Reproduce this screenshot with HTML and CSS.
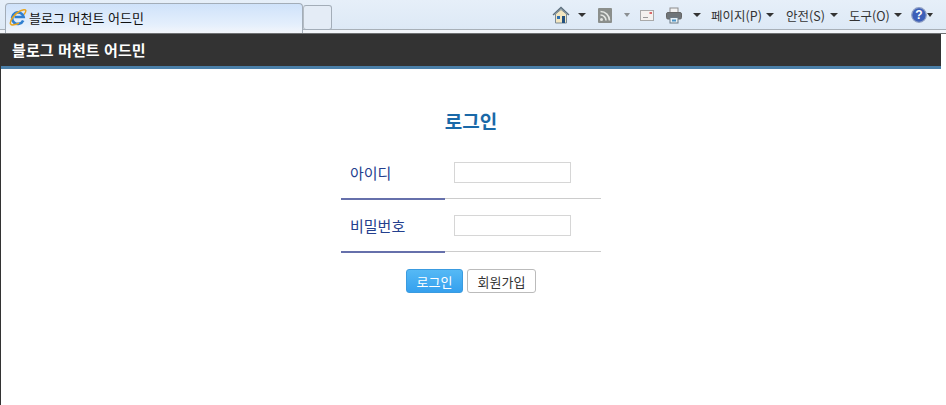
FILE: index.html
```html
<!DOCTYPE html>
<html lang="ko">
<head>
<meta charset="utf-8">
<title>블로그 머천트 어드민</title>
<link rel="stylesheet" href="styles.css">
</head>
<body>
<div class="chrome">
  <div class="tabs">
    <div class="tab active">
      <svg class="ie" viewBox="0 0 18 18" width="18" height="18">
        <path d="M14.200 12.500A5.800 5.800 0 1 1 14.600 9H5.500" fill="none" stroke="#2f7fd0" stroke-width="2.700"/>
        <path d="M1.500 16C.5 13 5 6 11 3c3-1.500 5.500-1.800 5.800-.5.200 1-.6 2.500-1.800 4" fill="none" stroke="#e9a51f" stroke-width="1.500"/>
        <path d="M1.500 16c1 1.500 5 1 8.500-.8" fill="none" stroke="#e9a51f" stroke-width="1.500"/>
      </svg>
      <span>블로그 머천트 어드민</span>
    </div>
    <div class="tab blank"></div>
  </div>
  <div class="tools">
    <svg class="ic ic-home" viewBox="0 0 18 18" width="18" height="18">
      <path d="M1 9 9 1.500 17 9" fill="#c8d2da" stroke="#5c6e7c" stroke-width="1.300"/>
      <path d="M3.500 8 9 3.500 14.500 8v9h-11z" fill="#f3e6c0" stroke="#7b8a94"/>
      <rect x="5" y="10" width="3" height="3" fill="#2f6fb0"/>
      <rect x="10" y="10" width="3" height="7" fill="#23507f"/>
    </svg>
    <i class="arrow a1"></i>
    <svg class="ic ic-rss" viewBox="0 0 14 15" width="14" height="15">
      <rect width="14" height="15" rx="1" fill="#8b8f8c"/>
      <circle cx="3.500" cy="11.500" r="1.500" fill="#e4e6e2"/>
      <path d="M2.500 7a5.500 5.500 0 0 1 5.500 5.500M2.500 3.500a9 9 0 0 1 9 9" fill="none" stroke="#e4e6e2" stroke-width="1.600"/>
    </svg>
    <i class="arrow a2 dim"></i>
    <svg class="ic ic-mail" viewBox="0 0 14 11" width="14" height="11">
      <rect x=".5" y=".5" width="13" height="10" fill="#f4f1ee" stroke="#a9a9a9"/>
      <rect x="9.500" y="2" width="2.500" height="2" fill="#d9686a"/>
      <path d="M3 7.500h5" stroke="#999"/>
    </svg>
    <svg class="ic ic-print" viewBox="0 0 16 17" width="16" height="17">
      <rect x="4" y="1" width="8" height="5" fill="#f2f2f2" stroke="#8c8c8c"/>
      <rect x=".5" y="5.500" width="15" height="6.500" rx="1.500" fill="#6f7478" stroke="#666"/>
      <rect x="4" y="10.500" width="8" height="5.500" fill="#e8f1f6" stroke="#6d7a85"/>
      <rect x="6" y="12.500" width="4" height="2" fill="#4a92c4"/>
    </svg>
    <i class="arrow a3"></i>
    <span class="menu m1">페이지(P)</span>
    <i class="arrow a4"></i>
    <span class="menu m2">안전(S)</span>
    <i class="arrow a5"></i>
    <span class="menu m3">도구(O)</span>
    <i class="arrow a6"></i>
    <svg class="ic ic-help" viewBox="0 0 16 16" width="16" height="16">
      <circle cx="8" cy="8" r="7.300" fill="#3c5fb8" stroke="#8f9fc4" stroke-width="1.200"/>
      <text x="8" y="12" text-anchor="middle" class="q">?</text>
    </svg>
    <i class="arrow a7"></i>
  </div>
</div>
<div class="page">
  <header class="bar">블로그 머천트 어드민</header>
  <main class="login">
    <h1>로그인</h1>
    <div class="row">
      <label for="uid">아이디</label>
      <div class="field"><input id="uid" type="text"></div>
    </div>
    <div class="row">
      <label for="pw">비밀번호</label>
      <div class="field"><input id="pw" type="password"></div>
    </div>
    <div class="actions">
      <button class="btn primary" type="button">로그인</button>
      <button class="btn" type="button">회원가입</button>
    </div>
  </main>
</div>
</body>
</html>
```
FILE: styles.css
```css
* { box-sizing: border-box; }
html, body { margin: 0; height: 100%; overflow: hidden; background: #fff; }
body { font-family: "Noto Sans CJK KR", "Noto Sans", sans-serif; color: #222; }

.chrome {
  height: 34px;
  display: flex;
  justify-content: space-between;
  background: linear-gradient(#e6eff9 0, #dde9f6 29px, #a8b0b8 29px, #a8b0b8 30px, #f3f6fb 30px);
  border-bottom: 1px solid #6f7173;
}
.tabs { display: flex; align-items: flex-end; padding-left: 5px; }
.tab { border: 1px solid #a3adb8; border-bottom: 0; border-radius: 4px 4px 0 0; }
.tab.active {
  width: 298px; height: 30px;
  display: flex; align-items: center; gap: 2px;
  padding: 0 0 3px 3px;
  font-size: 13px;
  background: linear-gradient(#cfe2fa, #e4effc 70%, #f3f6fb);
  color: #111;
}
.tab.blank {
  width: 29px; height: 25px; margin-bottom: 3px;
  border: 1px solid #a3adb8;
  border-left-color: #b4bcc4;
  border-radius: 3px;
  background: #e4ecf6;
}
.ie { flex: none; }

.tools { display: flex; align-items: center; padding: 0 13px 3px 0; font-size: 12.500px; color: #333; }
.ic { flex: none; display: block; }
.arrow {
  flex: none; width: 0; height: 0;
  border: 4px solid transparent; border-top: 4px solid #333; border-bottom: 0;
}
.arrow.dim { border-top-color: #8b8f92; border-left-width: 3px; border-right-width: 3px; }
.a1 { margin-left: 8px; }
.ic-rss { margin-left: 12px; }
.a2 { margin-left: 12px; }
.ic-mail { margin-left: 10px; }
.ic-print { margin-left: 12px; }
.a3 { margin-left: 11px; }
.menu { white-space: nowrap; }
.m1 { margin-left: 10px; width: 51px; }
.a4 { margin-left: 4px; }
.m2 { margin-left: 12px; width: 41px; }
.a5 { margin-left: 3px; }
.m3 { margin-left: 11px; width: 41px; }
.a6 { margin-left: 4px; }
.ic-help { margin-left: 9px; }
.q { font: bold 12px "Liberation Sans", sans-serif; fill: #fff; }
.a7 { margin-left: 0; border-left-width: 3.500px; border-right-width: 3.500px; }

.page { width: 941px; height: 371px; border-left: 1px solid #333; }
.bar {
  height: 35px;
  padding: 0 0 2px 11px;
  display: flex; align-items: center;
  background: #333;
  border-bottom: 3px solid #4a7fa8;
  color: #fff;
  font-size: 15px; font-weight: 700;
  letter-spacing: .1px;
}

.login { width: 260px; margin-left: 340px; padding-top: 39px; }
h1 {
  margin: 0 0 12px;
  height: 26px; line-height: 26px;
  text-align: center;
  font-size: 19px; font-weight: 700;
  color: #1a69a8;
}
.row {
  height: 53px;
  display: grid;
  grid-template-columns: 104px 156px;
  border-bottom: 1px solid #ccc;
}
.row label {
  display: flex; align-items: center;
  margin-bottom: -2px;
  padding: 1px 0 0 9px;
  font-size: 15px;
  color: #24408e;
  border-bottom: 2px solid #6670ab;
}
.field { padding: 16px 0 0 9px; }
.field input {
  display: block;
  width: 117px; height: 21px;
  border: 1px solid #d6d6d6;
  background: #fff;
  padding: 0;
  outline: 0;
}
.actions { display: flex; justify-content: center; gap: 4px; margin-top: 17px; }
.btn {
  height: 24px;
  padding: 0;
  width: 69px;
  font: 13px "Noto Sans CJK KR", sans-serif;
  color: #333;
  background: #fff;
  border: 1px solid #bbb;
  border-radius: 3px;
}
.btn.primary {
  width: 57px;
  color: #fff;
  background: linear-gradient(#55b9f5, #35a0ee);
  border-color: #3a9be0;
}
```
